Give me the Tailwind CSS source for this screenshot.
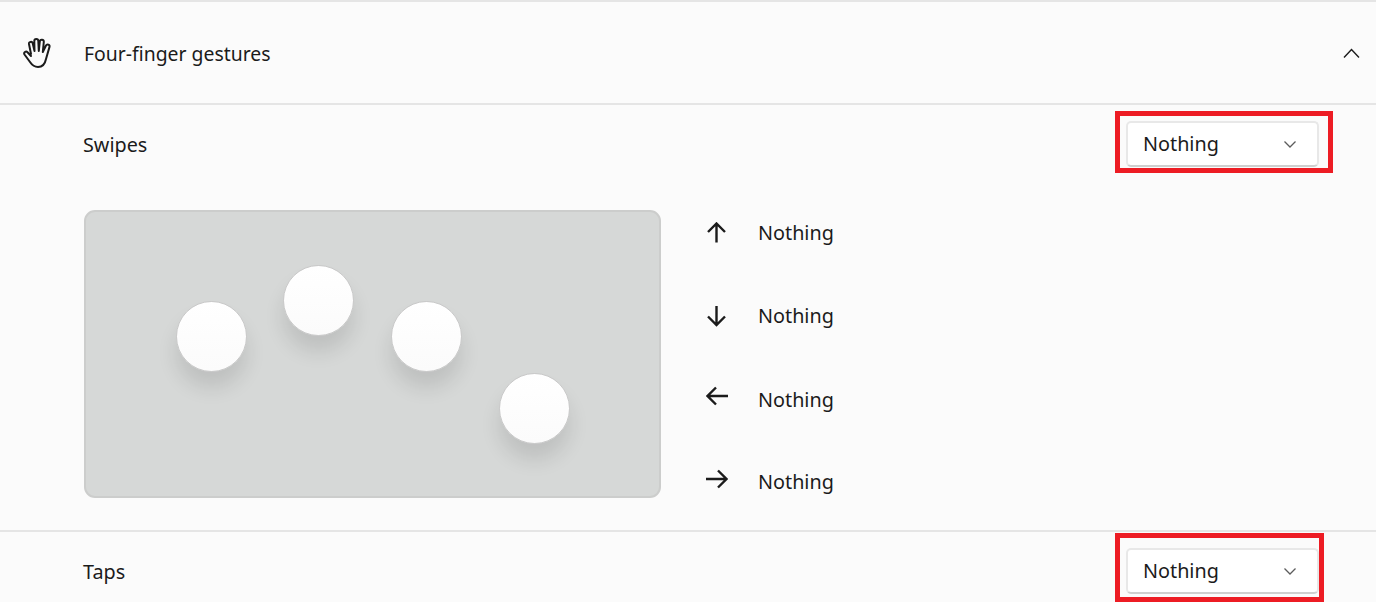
<!DOCTYPE html>
<html lang="en">

<head>
    <meta charset="UTF-8">
    <title>Four-finger gestures</title>
    <script src="https://cdn.jsdelivr.net/npm/@tailwindcss/browser@4"></script>
</head>

<body class="bg-[#fbfbfb] font-['Noto_Sans','Open_Sans',sans-serif] text-[#1b1b1b] text-[19.8px] h-[602px] w-[1376px] overflow-hidden relative">
    <!-- header row -->
    <div class="h-[105px] border-t-2 border-b-2 border-[#e5e5e5] flex items-center pl-[22px] pr-[15px]">
        <svg class="w-[34px] h-[36px] -ml-[2px]" viewBox="20 34 34 36" fill="none" stroke="#1b1b1b" stroke-width="2" stroke-linejoin="round" stroke-linecap="round">
            <path d="M31 53L29 43a1.9 1.9 0 0 1 3.7-.8L34.5 50L34.3 40a2 2 0 0 1 4 0L38.8 50L39.8 40.5a2 2 0 0 1 4 .4L42.8 51L46 44.5a1.9 1.9 0 0 1 3.5 1.4L46 58C45 63 43 66 38 66C34 66 32 64 30 61L24.5 53.5a1.9 1.9 0 0 1 3-2.3L31 55" />
        </svg>
        <span class="ml-[30px] mt-[2px] leading-none text-[19.4px]">Four-finger gestures</span>
        <svg class="ml-auto w-[18px] h-[10px]" viewBox="0 0 18 10" fill="none" stroke="#1b1b1b" stroke-width="1.4">
            <path d="M1 9.5L8.5 1.5L16 9.5" />
        </svg>
    </div>

    <!-- swipes -->
    <div class="flex items-center justify-between h-[78px] pl-[83px] pr-[57px]">
        <span class="mt-[1px]">Swipes</span>
        <div class="w-[193px] h-[46px] bg-white rounded-[5px] border-2 border-[#e8e8e8] border-b-[#cfcfcf] flex items-center justify-between pl-[15px] pr-[21px]">
            <span>Nothing</span>
            <svg class="w-[12px] h-[7px]" viewBox="0 0 12 7" fill="none" stroke="#5c5c5c" stroke-width="1.3">
                <path d="M.5 .5L6 6L11.5 .5" />
            </svg>
        </div>
    </div>

    <!-- gesture preview + direction list -->
    <div class="flex h-[349px] border-b-2 border-[#e5e5e5] pl-[84px] pt-[27px]">
        <div class="relative shrink-0 w-[577px] h-[288px] bg-[#d6d8d7] border-2 border-[#cccdcc] rounded-[11px]">
            <div class="absolute left-[89.5px] top-[88.5px] w-[71px] h-[71px] rounded-full bg-linear-to-b from-white to-[#fbfbfb] border border-[#c9c9c9] shadow-[0_16px_20px_rgba(0,0,0,0.11)]"></div>
            <div class="absolute left-[196.5px] top-[52.5px] w-[71px] h-[71px] rounded-full bg-linear-to-b from-white to-[#fbfbfb] border border-[#c9c9c9] shadow-[0_16px_20px_rgba(0,0,0,0.11)]"></div>
            <div class="absolute left-[304.5px] top-[88.5px] w-[71px] h-[71px] rounded-full bg-linear-to-b from-white to-[#fbfbfb] border border-[#c9c9c9] shadow-[0_16px_20px_rgba(0,0,0,0.11)]"></div>
            <div class="absolute left-[412.5px] top-[160.5px] w-[71px] h-[71px] rounded-full bg-linear-to-b from-white to-[#fbfbfb] border border-[#c9c9c9] shadow-[0_16px_20px_rgba(0,0,0,0.11)]"></div>
        </div>
        <div class="ml-[45px] -mt-[19px] flex flex-col">
            <div class="h-[83px] shrink-0 flex items-center gap-[30px]">
                <svg class="w-[22px] h-[22px]" viewBox="0 0 22 22" fill="none" stroke="#1b1b1b" stroke-width="2.4"><path d="M10.5 1.5V20.5M2 10L10.5 1.5L19 10" /></svg>
                <span>Nothing</span>
            </div>
            <div class="h-[84px] shrink-0 flex items-center gap-[30px]">
                <svg class="w-[22px] h-[22px]" viewBox="0 0 22 22" fill="none" stroke="#1b1b1b" stroke-width="2.4"><path d="M10.5 1V20M2 11.5L10.5 20L19 11.5" /></svg>
                <span>Nothing</span>
            </div>
            <div class="h-[83px] shrink-0 flex items-center gap-[30px]">
                <svg class="w-[22px] h-[22px] -mt-[7px]" viewBox="0 0 22 22" fill="none" stroke="#1b1b1b" stroke-width="2.4"><path d="M1.5 11H22M10 2.5L1.5 11L10 19.5" /></svg>
                <span>Nothing</span>
            </div>
            <div class="h-[82px] shrink-0 flex items-center gap-[30px]">
                <svg class="w-[22px] h-[22px] -mt-[6px]" viewBox="0 0 22 22" fill="none" stroke="#1b1b1b" stroke-width="2.4"><path d="M0 11H20.5M12 2.5L20.5 11L12 19.5" /></svg>
                <span>Nothing</span>
            </div>
        </div>
    </div>

    <!-- taps -->
    <div class="flex items-center justify-between h-[78px] pl-[83px] pr-[57px]">
        <span class="mt-[1px]">Taps</span>
        <div class="w-[193px] h-[46px] bg-white rounded-[5px] border-2 border-[#e8e8e8] border-b-[#cfcfcf] flex items-center justify-between pl-[15px] pr-[21px]">
            <span>Nothing</span>
            <svg class="w-[12px] h-[7px]" viewBox="0 0 12 7" fill="none" stroke="#5c5c5c" stroke-width="1.3">
                <path d="M.5 .5L6 6L11.5 .5" />
            </svg>
        </div>
    </div>

    <!-- red annotation boxes -->
    <div class="absolute left-[1115px] top-[111px] w-[218px] h-[62px] border-[5px] border-[#ed1c24]"></div>
    <div class="absolute left-[1115px] top-[533px] w-[209px] h-[69px] border-[5px] border-[#ed1c24]"></div>
</body>

</html>
